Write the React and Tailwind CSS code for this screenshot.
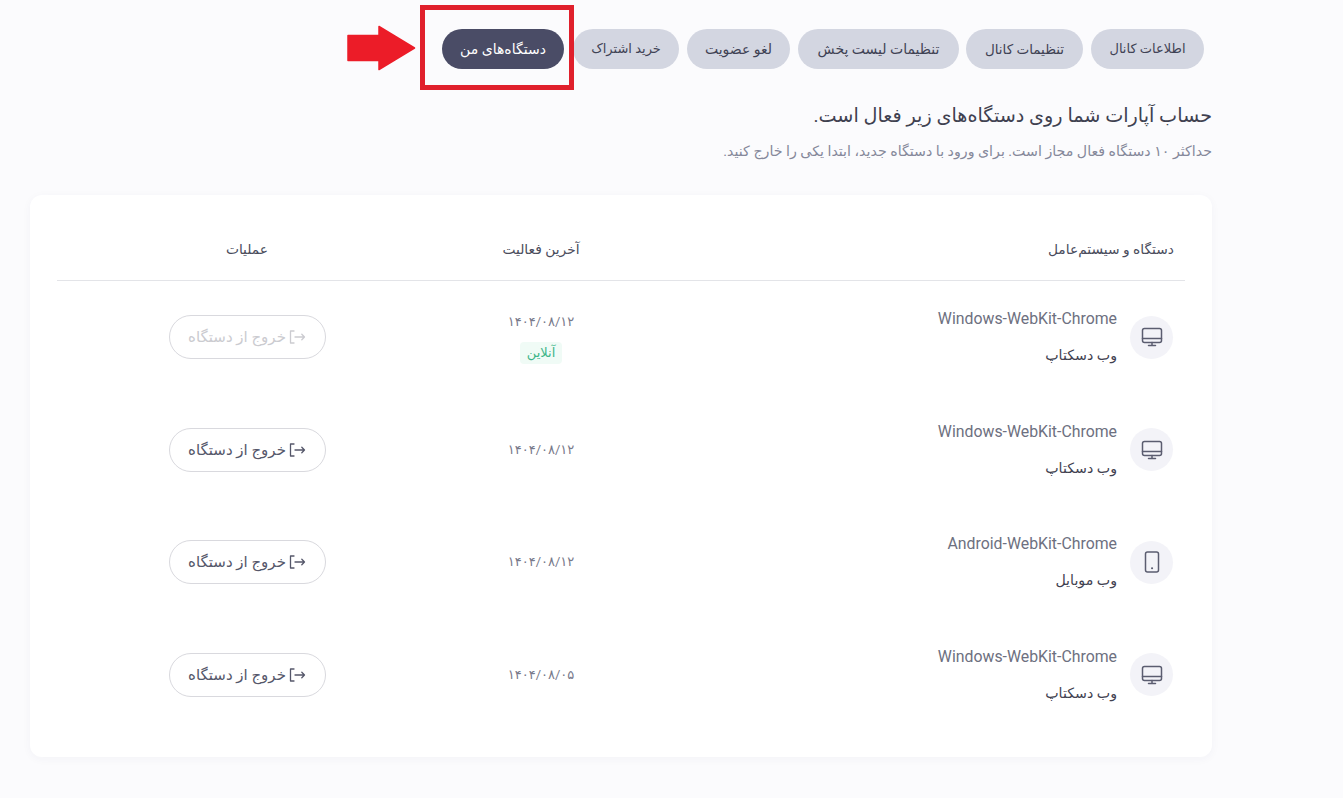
import React from "react";

const FONT = "[font-family:Roboto,'DejaVu_Sans',sans-serif]";

const tabs = [
  { label: "اطلاعات کانال", cls: "w-[113px] text-[13px]" },
  { label: "تنظیمات کانال", cls: "w-[117px] text-[13.5px]" },
  { label: "تنظیمات لیست پخش", cls: "w-[161px] -mr-px text-[14px]" },
  { label: "لغو عضویت", cls: "w-[103px] text-[14px]" },
  { label: "خرید اشتراک", cls: "w-[106px] text-[13px]" },
];

const devices = [
  { name: "Windows-WebKit-Chrome", type: "وب دسکتاپ", date: "۱۴۰۴/۰۸/۱۲", online: true, mobile: false },
  { name: "Windows-WebKit-Chrome", type: "وب دسکتاپ", date: "۱۴۰۴/۰۸/۱۲", online: false, mobile: false },
  { name: "Android-WebKit-Chrome", type: "وب موبایل", date: "۱۴۰۴/۰۸/۱۲", online: false, mobile: true },
  { name: "Windows-WebKit-Chrome", type: "وب دسکتاپ", date: "۱۴۰۴/۰۸/۰۵", online: false, mobile: false },
];

function MonitorIcon() {
  return (
    <svg width="22" height="22" viewBox="0 0 22 22" fill="none" stroke="#5b5d70" strokeWidth="1.5" strokeLinecap="round" strokeLinejoin="round">
      <rect x="1.5" y="2.5" width="19" height="14" rx="2" />
      <path d="M1.5 12.5h19M11 16.5v3M7.5 19.5h7" />
    </svg>
  );
}

function PhoneIcon() {
  return (
    <svg width="22" height="22" viewBox="0 0 22 22" fill="none" stroke="#5b5d70" strokeWidth="1.5" strokeLinecap="round" strokeLinejoin="round">
      <rect x="4.5" y="1" width="13" height="20" rx="2" />
      <path d="M11 17.2h.1" strokeWidth="2" />
    </svg>
  );
}

function ExitIcon() {
  return (
    <svg width="17" height="16" viewBox="0 0 17 16" fill="none" stroke="currentColor" strokeWidth="1.3" strokeLinecap="round" strokeLinejoin="round">
      <path d="M5 2H1.5v12H5" />
      <path d="M6 8h9.5M12.8 5.3l2.7 2.7-2.7 2.7" />
    </svg>
  );
}

export default function App() {
  return (
    <div dir="rtl" className={`min-h-[798px] bg-[#fbfbfd] relative ${FONT}`}>
      <div className="mr-[131px] w-[1182px] pt-[29px]">
        {/* Tabs */}
        <div className="flex gap-2 pr-2">
          {tabs.map((t) => (
            <button key={t.label} className={`h-10 ${t.cls} rounded-full bg-[#d3d6e1] text-[#3f4254]`}>
              {t.label}
            </button>
          ))}
          <button className="h-10 w-[122px] mr-[1px] rounded-full bg-[#4a4c66] text-[14px] text-white">دستگاه‌های من</button>
        </div>

        <h2 className="mt-[33px] text-[19.2px] leading-7 text-[#3f4150]">حساب آپارات شما روی دستگاه‌های زیر فعال است.</h2>
        <p className="mt-[11px] text-[14.2px] leading-5 text-[#85889a]">حداکثر ۱۰ دستگاه فعال مجاز است. برای ورود با دستگاه جدید، ابتدا یکی را خارج کنید.</p>

        {/* Devices table */}
        <div className="mt-[34px] h-[562px] rounded-xl bg-white px-[27px] shadow-[0_2px_10px_rgba(60,60,90,0.04)]">
          <div className="grid h-[86px] grid-cols-[540px_208px_380px] items-center border-b border-[#e3e4e8] pt-[24px] text-[13.8px] text-[#4a4c5c]">
            <div className="pr-[11px]">دستگاه و سیستم‌عامل</div>
            <div className="text-center">آخرین فعالیت</div>
            <div className="text-center">عملیات</div>
          </div>
          {devices.map((d, i) => (
            <div key={i} className="grid h-[112.5px] grid-cols-[540px_208px_380px] items-center">
              <div className="flex items-center gap-[13px] pr-[12px]">
                <div className="flex h-[43px] w-[43px] items-center justify-center rounded-full bg-[#f3f3f8]">
                  {d.mobile ? <PhoneIcon /> : <MonitorIcon />}
                </div>
                <div className="flex flex-col gap-[14px]">
                  <div className="text-[15.85px] leading-[22px] text-[#6d7080]">{d.name}</div>
                  <div className="text-[14.2px] leading-[22px] text-[#3f4150]">{d.type}</div>
                </div>
              </div>
              <div className="flex flex-col items-center gap-[9px]">
                <div className="text-[13px] leading-[22px] text-[#77798a]">{d.date}</div>
                {d.online && (
                  <span className="rounded bg-[#f0fbf6] px-[7px] text-[13px] leading-[22px] text-[#3cb588]">آنلاین</span>
                )}
              </div>
              <div className="flex justify-center">
                <button
                  disabled={d.online}
                  className={`flex h-[44px] w-[157px] items-center justify-center gap-[3px] rounded-full border border-[#d9d9de] text-[15px] ${
                    d.online ? "text-[#cbcbd0]" : "text-[#55576a]"
                  }`}
                >
                  <ExitIcon />
                  <span>خروج از دستگاه</span>
                </button>
              </div>
            </div>
          ))}
        </div>
      </div>

      {/* Annotation added over the screenshot */}
      <div className="absolute left-[420px] top-[5px] h-[85px] w-[154px] border-[5px] border-[#e0202c]" />
      <svg className="absolute left-[347px] top-[25px]" width="69" height="46" viewBox="0 0 69 46">
        <path d="M1 10.5h31V1.5L67.5 23 32 44.5V35.5H1z" fill="#ec1c28" stroke="#ec1c28" strokeWidth="1.5" strokeLinejoin="round" />
      </svg>
    </div>
  );
}
